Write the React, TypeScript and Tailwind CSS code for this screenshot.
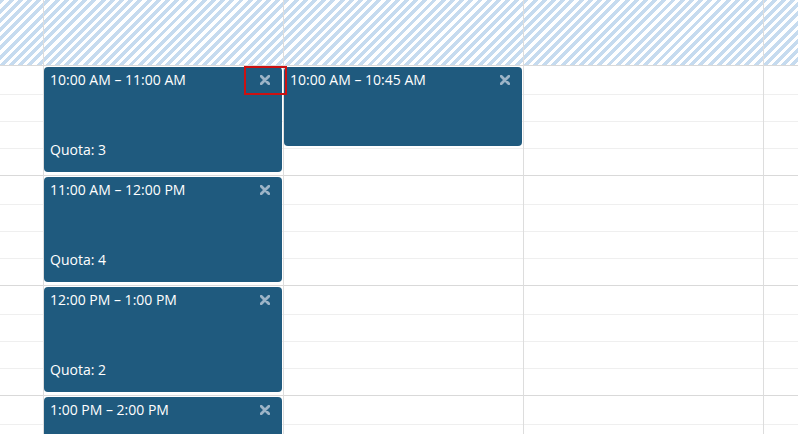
import React from "react";

type Ev = { top: number; height: number; title: string; quota?: number };

const slotHeights = [29, 27, 27, 27];
const hours = [0, 1, 2, 3];

function CloseIcon() {
  return (
    <svg width="10" height="10" viewBox="0 0 10 10" className="block">
      <path d="M1.2 1.2 L8.8 8.8 M8.8 1.2 L1.2 8.8" stroke="#9db4c7" strokeWidth="2.8" strokeLinecap="round" />
    </svg>
  );
}

function EventCard({ ev }: { ev: Ev }) {
  return (
    <div
      className="absolute left-0 right-px rounded-[4px] bg-[#1f5a7e] text-white overflow-hidden"
      style={{ top: ev.top, height: ev.height }}
    >
      <div className="pl-[6px] pt-[4px] text-[14px] leading-[18px]">{ev.title}</div>
      <div className="absolute right-[12px] top-[8px]">
        <CloseIcon />
      </div>
      {ev.quota !== undefined && (
        <div className="absolute left-[6px] top-[74px] text-[14px] leading-[18px]">Quota: {ev.quota}</div>
      )}
    </div>
  );
}

function Column({ className, events }: { className: string; events: Ev[] }) {
  return (
    <div className={className}>
      <div className="h-[65px] shrink-0 bg-fixed bg-[image:repeating-linear-gradient(135deg,#c6dbef_0px,#c6dbef_3.5px,#ffffff_3.5px,#ffffff_6.5px)]" />
      <div className="relative flex flex-col">
        {hours.map((h) => (
          <div key={h} className="flex flex-col">
            {slotHeights.map((sh, i) => (
              <div
                key={i}
                className={i === 0 ? "border-t border-[#d9d9d9]" : "border-t border-[#efefef]"}
                style={{ height: sh }}
              />
            ))}
          </div>
        ))}
        {events.map((ev, i) => (
          <EventCard key={i} ev={ev} />
        ))}
      </div>
    </div>
  );
}

const col1: Ev[] = [
  { top: 2, height: 105, title: "10:00 AM – 11:00 AM", quota: 3 },
  { top: 112, height: 105, title: "11:00 AM – 12:00 PM", quota: 4 },
  { top: 222, height: 105, title: "12:00 PM – 1:00 PM", quota: 2 },
  { top: 332, height: 105, title: "1:00 PM – 2:00 PM" },
];
const col2: Ev[] = [{ top: 2, height: 79, title: "10:00 AM – 10:45 AM" }];

export default function App() {
  return (
    <div
      className="relative w-[798px] h-[434px] overflow-hidden bg-white flex"
      style={{ fontFamily: '"Open Sans", "Noto Sans", sans-serif' }}
    >
      <Column className="w-[44px] shrink-0 flex flex-col border-r border-[#dddddd]" events={[]} />
      <Column className="w-[240px] shrink-0 flex flex-col border-r border-[#dddddd]" events={col1} />
      <Column className="w-[240px] shrink-0 flex flex-col border-r border-[#dddddd]" events={col2} />
      <Column className="w-[240px] shrink-0 flex flex-col border-r border-[#dddddd]" events={[]} />
      <Column className="flex-1 flex flex-col" events={[]} />
      <div className="absolute left-[244px] top-[66px] w-[43px] h-[29px] border-2 border-[#cc1111]" />
    </div>
  );
}
